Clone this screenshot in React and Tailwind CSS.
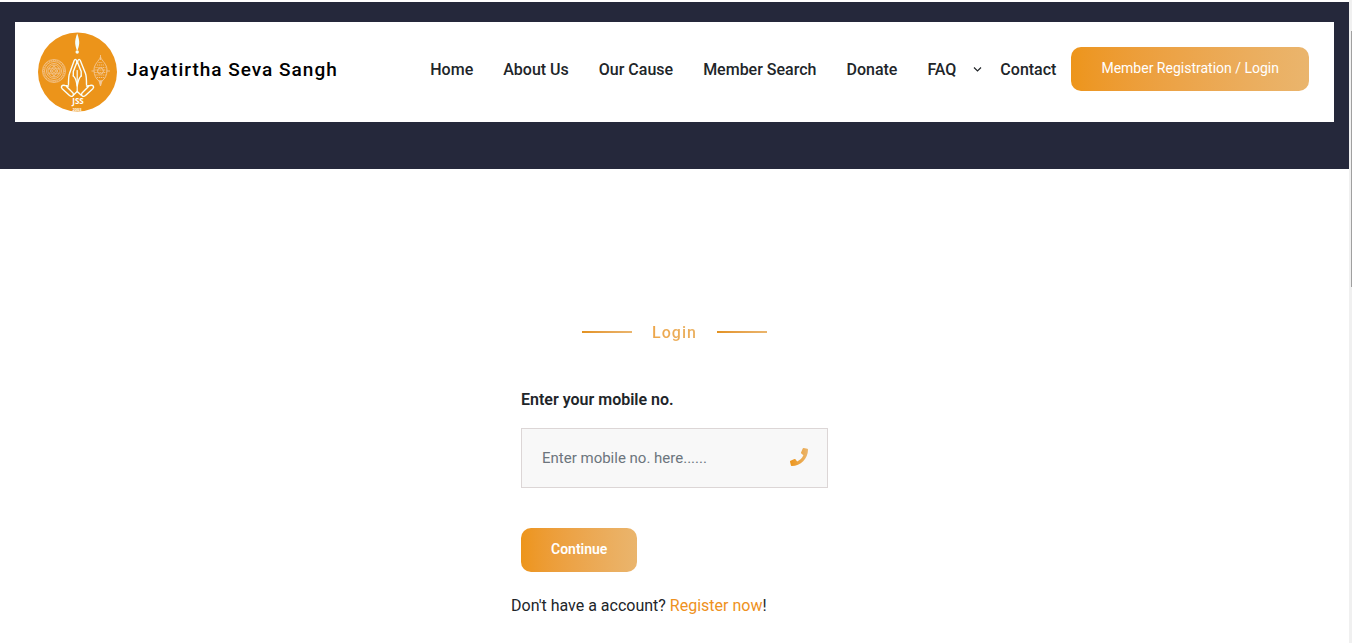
import React from 'react';
import { FaPhone } from 'react-icons/fa';

const navLinks = ['Home', 'About Us', 'Our Cause', 'Member Search', 'Donate'];

const Logo = () => (
    <svg viewBox="0 0 80 80" className="h-20 w-20 shrink-0" role="img" aria-label="JSS">
        <circle cx="40.500" cy="40" r="39.500" fill="#ec941a" />

        {/* flame */}
        <path d="M40.200 1.500C38.900 5 37.900 8.500 38.200 11.500C38.400 14 39.200 16 39.700 18H40.700C41.200 16 42 14 42.200 11.500C42.500 8.500 41.500 5 40.200 1.500Z" fill="#f4fffa" />
        <circle cx="40.200" cy="20" r="1.700" fill="#f4fffa" />

        {/* chakra */}
        <g fill="none" stroke="#f3c99a" strokeWidth="0.8">
            <circle cx="17" cy="39" r="11.500" />
            <circle cx="17" cy="39" r="9.500" />
            <circle cx="17" cy="39" r="7.500" />
            <circle cx="17" cy="39" r="6" />
            <path d="M17 33.500L21.800 41.800H12.200ZM17 44.500L12.200 36.200H21.800Z" />
            <circle cx="17" cy="39" r="1.500" />
            <circle cx="17" cy="39" r="10.500" strokeWidth="1" strokeDasharray="1 1" />
        </g>

        {/* shell */}
        <g fill="none" stroke="#f3c99a" strokeWidth="0.9">
            <path d="M63.500 23V28M63.500 49V54M54.500 39H57M69.500 39H73" />
            <path d="M63.500 25C62 29 57 32 57 38C57 43 59 47 62 49H65C68 47 70 43 70 38C70 32 65 29 63.500 25Z" />
            <path d="M60 33H67M61.500 30.500H65.500M58.500 35.500H68.500M57.500 38H69.500M57.500 40.500H69.500M58.500 43H68.500M60 45.500H67" strokeDasharray="1.200 0.700" />
            <circle cx="63.500" cy="39" r="3" />
            <path d="M62 49L63.500 54L65 49Z" fill="#f3c99a" />
        </g>

        {/* folded hands */}
        <g fill="none" stroke="#f8fffa" strokeWidth="1.400" strokeLinecap="round" strokeLinejoin="round">
            <path d="M40.200 31L39.500 28.500C39 27 37.800 27 37.200 28.500L32.500 41.500C31.500 44 31.500 46 31.500 52.500" />
            <path d="M40.200 31L41 28.500C41.500 27 42.700 27 43.300 28.500L48.500 41.500C49.500 44 49.500 46 49.500 52.500" />
            <path d="M36.300 44V39.500L40.200 29.500L44.200 39.500V44" />
            <path d="M40.200 38.500V60" strokeWidth="1.200" />
            <path d="M36.300 44C38.500 45.500 39.500 49 40.200 54C41 49 42 45.500 44.200 44" />
            <path d="M40.200 59.500L36.500 63M40.200 59.500L44 63" />
            <path d="M31.500 54L28 53.500C25 52.500 23.300 54.800 25.200 56.800L32.500 63.500C35 65.500 37.500 63.500 36 61L29.500 54.500" />
            <path d="M49.500 54L53 53.500C56 52.500 57.700 54.800 55.800 56.800L48.500 63.500C46 65.500 43.500 63.500 45 61L51.500 54.500" />
        </g>

        <text x="41" y="72" textAnchor="middle" fontSize="8" fontWeight="700" fill="#fff" fontFamily="Open Sans, sans-serif">JSS</text>
        <text x="40" y="78.500" textAnchor="middle" fontSize="4" fontWeight="700" fill="#fff" fontFamily="Open Sans, sans-serif">2003</text>
    </svg>
);

const Header = () => (
    <header className="bg-[#25283b] px-[15px] pt-5 pb-[47px]">
        <div className="flex h-[100px] items-center bg-white pr-[25px] pl-[22px]">
            <a href="#home" className="flex items-center gap-[10px]">
                <Logo />
                <span className="pb-[3px] text-[19px] font-medium tracking-[1px] whitespace-nowrap text-black">Jayatirtha Seva Sangh</span>
            </a>
            <nav className="ml-auto flex items-center pb-1.5 font-medium whitespace-nowrap">
                <ul className="mr-[15px] flex items-center gap-[30px] pt-[2px]">
                    {navLinks.map((label) => (
                        <li key={label}>
                            <a href="#page">{label}</a>
                        </li>
                    ))}
                    <li className="-mr-3">
                        <a href="#faq" className="flex items-center gap-4">
                            FAQ
                            <svg viewBox="0 0 10 10" className="h-[10px] w-[10px]" fill="none" stroke="currentColor" strokeWidth="1.200">
                                <path d="M2 2.500L5.500 6L9 2.500" />
                            </svg>
                        </a>
                    </li>
                    <li>
                        <a href="#contact">Contact</a>
                    </li>
                </ul>
                <a href="#login" className="flex h-11 items-center rounded-[10px] bg-linear-to-r from-[#ed951a] to-[#eab56d] px-[30px] pb-[2px] text-sm font-normal text-white">
                    Member Registration / Login
                </a>
            </nav>
        </div>
    </header>
);

const LoginForm = () => (
    <main className="flex flex-col items-center pt-[150px]">
        <h1 className="flex items-center gap-5 font-medium">
            <span className="h-[2px] w-[50px] bg-linear-to-r from-[#e3921f] to-[#eab56d]" />
            <span className="bg-linear-to-r from-[#eda64a] to-[#eab060] bg-clip-text pt-[2px] tracking-[1px] text-transparent">Login</span>
            <span className="h-[2px] w-[50px] bg-linear-to-r from-[#e3921f] to-[#eab56d]" />
        </h1>
        <div className="mt-[43px] w-[327px] max-w-full">
            <form className="px-[10px]" onSubmit={(e) => e.preventDefault()}>
                <label htmlFor="mobile" className="block font-semibold">Enter your mobile no.</label>
                <div className="mt-4 flex h-[60px] items-center border border-[#dcd6d6] bg-[#f8f8f8] pr-[19px] pl-5">
                    <input
                        id="mobile"
                        type="tel"
                        placeholder="Enter mobile no. here......"
                        className="min-w-0 flex-1 bg-transparent text-[15px] outline-none placeholder:text-[#6c757d]"
                    />
                    <svg width="0" height="0">
                        <linearGradient id="phone" x1="0" x2="1">
                            <stop offset="0" stopColor="#ed951a" />
                            <stop offset="1" stopColor="#eab56d" />
                        </linearGradient>
                    </svg>
                    <FaPhone size={18} className="mb-[2px] fill-[url(#phone)]" />
                </div>
                <button type="submit" className="mt-10 h-11 rounded-[10px] bg-linear-to-r from-[#ed951a] to-[#eab56d] px-[30px] pb-[2px] text-sm font-semibold text-white">
                    Continue
                </button>
            </form>
            <p className="mt-[22px]">
                Don't have a account? <a href="#register" className="text-[#ee9121]">Register now</a>!
            </p>
        </div>
    </main>
);

const App = () => {
    return (
        <div className="flex h-screen overflow-hidden bg-white pt-[2px] font-[Roboto,sans-serif] text-base text-[#212529]">
            <div className="min-w-0 flex-1">
                <Header />
                <LoginForm />
            </div>
            {/* scroll track */}
            <div className="-mt-[2px] w-[3px] bg-[#f0f0f0] pt-[31px] pl-[2px]">
                <div className="h-64 bg-[#a0a0a0]" />
            </div>
        </div>
    );
};

export default App;
